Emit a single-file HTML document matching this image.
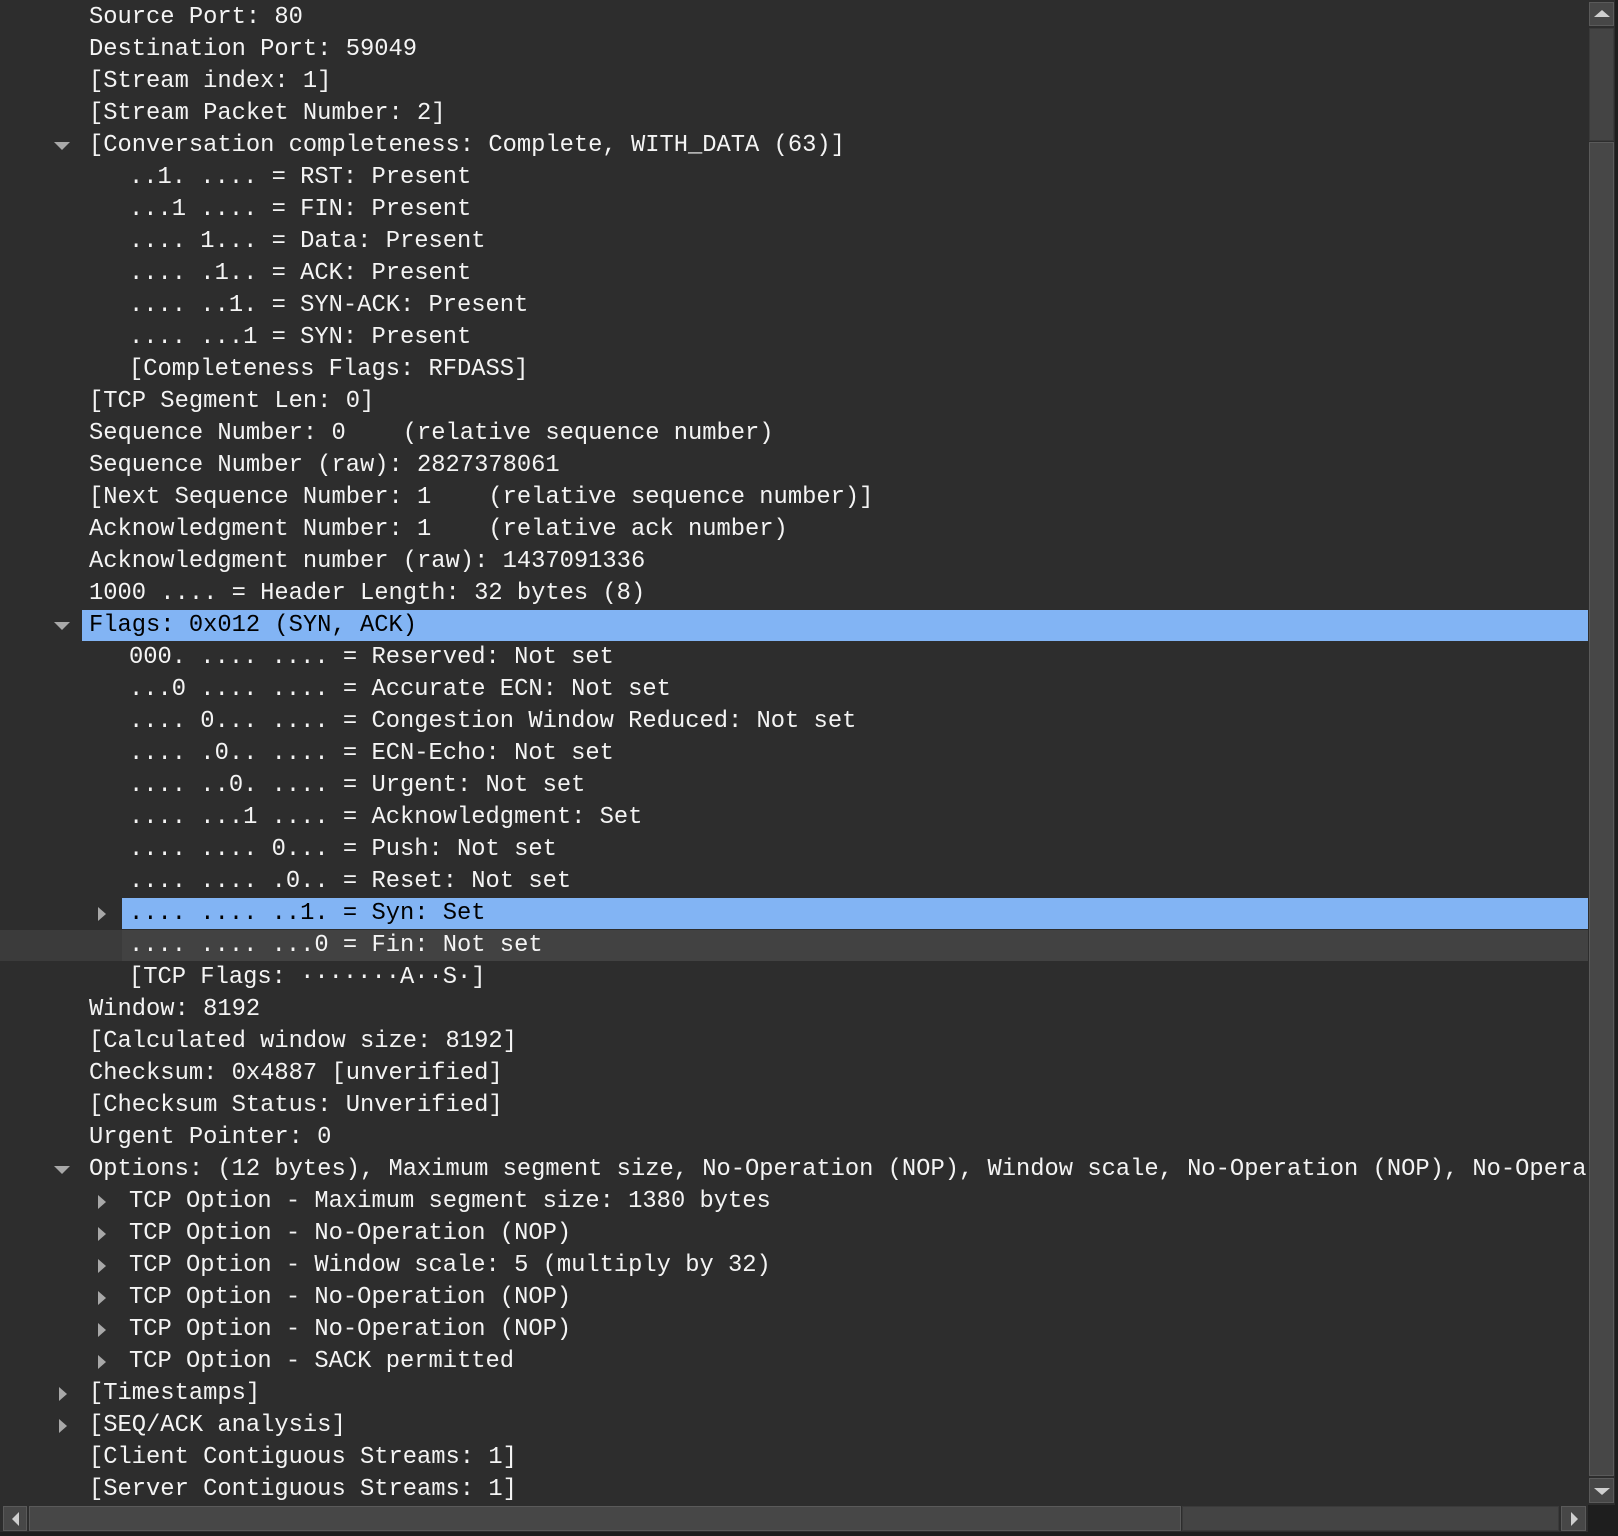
<!DOCTYPE html>
<html><head><meta charset="utf-8"><style>
html,body{margin:0;padding:0;background:#1e1e1e;}
#w{position:relative;width:1618px;height:1536px;overflow:hidden;background:#1e1e1e;}
#p{position:absolute;left:0;top:0;width:1588px;height:1505px;background:#2d2d2d;overflow:hidden;}
.r{position:absolute;left:0;width:1588px;height:32px;font-family:"Liberation Mono",monospace;font-size:23.78px;line-height:32px;color:#f4f4f4;white-space:pre;}
.r span.t{position:absolute;top:0;}
.hl{position:absolute;top:0;right:0;height:31px;background:#82b4f4;}
.hv{position:absolute;top:0;left:0;right:0;height:31px;background:#3b3b3b;}
.hv2{position:absolute;top:0;right:0;height:31px;background:#424242;}
.d{position:absolute;width:0;height:0;border-left:8px solid transparent;border-right:8px solid transparent;border-top:8px solid #a8a8a8;top:12px;}
.a{position:absolute;width:0;height:0;border-top:7px solid transparent;border-bottom:7px solid transparent;border-left:8px solid #a8a8a8;top:9px;}
.sb{position:absolute;background:#474747;border:1px solid #5a5a5a;box-sizing:border-box;}
</style></head><body><div id="w"><div id="p">
<div class="r" style="top:2px"><span class="t" style="left:89px">Source Port: 80</span></div>
<div class="r" style="top:34px"><span class="t" style="left:89px">Destination Port: 59049</span></div>
<div class="r" style="top:66px"><span class="t" style="left:89px">[Stream index: 1]</span></div>
<div class="r" style="top:98px"><span class="t" style="left:89px">[Stream Packet Number: 2]</span></div>
<div class="r" style="top:130px"><i class="d" style="left:54px"></i><span class="t" style="left:89px">[Conversation completeness: Complete, WITH_DATA (63)]</span></div>
<div class="r" style="top:162px"><span class="t" style="left:129px">..1. .... = RST: Present</span></div>
<div class="r" style="top:194px"><span class="t" style="left:129px">...1 .... = FIN: Present</span></div>
<div class="r" style="top:226px"><span class="t" style="left:129px">.... 1... = Data: Present</span></div>
<div class="r" style="top:258px"><span class="t" style="left:129px">.... .1.. = ACK: Present</span></div>
<div class="r" style="top:290px"><span class="t" style="left:129px">.... ..1. = SYN-ACK: Present</span></div>
<div class="r" style="top:322px"><span class="t" style="left:129px">.... ...1 = SYN: Present</span></div>
<div class="r" style="top:354px"><span class="t" style="left:129px">[Completeness Flags: RFDASS]</span></div>
<div class="r" style="top:386px"><span class="t" style="left:89px">[TCP Segment Len: 0]</span></div>
<div class="r" style="top:418px"><span class="t" style="left:89px">Sequence Number: 0    (relative sequence number)</span></div>
<div class="r" style="top:450px"><span class="t" style="left:89px">Sequence Number (raw): 2827378061</span></div>
<div class="r" style="top:482px"><span class="t" style="left:89px">[Next Sequence Number: 1    (relative sequence number)]</span></div>
<div class="r" style="top:514px"><span class="t" style="left:89px">Acknowledgment Number: 1    (relative ack number)</span></div>
<div class="r" style="top:546px"><span class="t" style="left:89px">Acknowledgment number (raw): 1437091336</span></div>
<div class="r" style="top:578px"><span class="t" style="left:89px">1000 .... = Header Length: 32 bytes (8)</span></div>
<div class="r" style="top:610px"><i class="hl" style="left:82px"></i><i class="d" style="left:54px"></i><span class="t" style="left:89px;color:#000">Flags: 0x012 (SYN, ACK)</span></div>
<div class="r" style="top:642px"><span class="t" style="left:129px">000. .... .... = Reserved: Not set</span></div>
<div class="r" style="top:674px"><span class="t" style="left:129px">...0 .... .... = Accurate ECN: Not set</span></div>
<div class="r" style="top:706px"><span class="t" style="left:129px">.... 0... .... = Congestion Window Reduced: Not set</span></div>
<div class="r" style="top:738px"><span class="t" style="left:129px">.... .0.. .... = ECN-Echo: Not set</span></div>
<div class="r" style="top:770px"><span class="t" style="left:129px">.... ..0. .... = Urgent: Not set</span></div>
<div class="r" style="top:802px"><span class="t" style="left:129px">.... ...1 .... = Acknowledgment: Set</span></div>
<div class="r" style="top:834px"><span class="t" style="left:129px">.... .... 0... = Push: Not set</span></div>
<div class="r" style="top:866px"><span class="t" style="left:129px">.... .... .0.. = Reset: Not set</span></div>
<div class="r" style="top:898px"><i class="hl" style="left:122px"></i><i class="a" style="left:98px"></i><span class="t" style="left:129px;color:#000">.... .... ..1. = Syn: Set</span></div>
<div class="r" style="top:930px"><i class="hv"></i><i class="hv2" style="left:122px"></i><span class="t" style="left:129px">.... .... ...0 = Fin: Not set</span></div>
<div class="r" style="top:962px"><span class="t" style="left:129px">[TCP Flags: ·······A··S·]</span></div>
<div class="r" style="top:994px"><span class="t" style="left:89px">Window: 8192</span></div>
<div class="r" style="top:1026px"><span class="t" style="left:89px">[Calculated window size: 8192]</span></div>
<div class="r" style="top:1058px"><span class="t" style="left:89px">Checksum: 0x4887 [unverified]</span></div>
<div class="r" style="top:1090px"><span class="t" style="left:89px">[Checksum Status: Unverified]</span></div>
<div class="r" style="top:1122px"><span class="t" style="left:89px">Urgent Pointer: 0</span></div>
<div class="r" style="top:1154px"><i class="d" style="left:54px"></i><span class="t" style="left:89px">Options: (12 bytes), Maximum segment size, No-Operation (NOP), Window scale, No-Operation (NOP), No-Operation (NOP), SACK permitted</span></div>
<div class="r" style="top:1186px"><i class="a" style="left:98px"></i><span class="t" style="left:129px">TCP Option - Maximum segment size: 1380 bytes</span></div>
<div class="r" style="top:1218px"><i class="a" style="left:98px"></i><span class="t" style="left:129px">TCP Option - No-Operation (NOP)</span></div>
<div class="r" style="top:1250px"><i class="a" style="left:98px"></i><span class="t" style="left:129px">TCP Option - Window scale: 5 (multiply by 32)</span></div>
<div class="r" style="top:1282px"><i class="a" style="left:98px"></i><span class="t" style="left:129px">TCP Option - No-Operation (NOP)</span></div>
<div class="r" style="top:1314px"><i class="a" style="left:98px"></i><span class="t" style="left:129px">TCP Option - No-Operation (NOP)</span></div>
<div class="r" style="top:1346px"><i class="a" style="left:98px"></i><span class="t" style="left:129px">TCP Option - SACK permitted</span></div>
<div class="r" style="top:1378px"><i class="a" style="left:59px"></i><span class="t" style="left:89px">[Timestamps]</span></div>
<div class="r" style="top:1410px"><i class="a" style="left:59px"></i><span class="t" style="left:89px">[SEQ/ACK analysis]</span></div>
<div class="r" style="top:1442px"><span class="t" style="left:89px">[Client Contiguous Streams: 1]</span></div>
<div class="r" style="top:1474px"><span class="t" style="left:89px">[Server Contiguous Streams: 1]</span></div>
</div>
<!-- vertical scrollbar -->
<div style="position:absolute;left:1588px;top:0;width:27px;height:1505px;background:#2d2d2d;"></div>
<div class="sb" style="left:1589px;top:2px;width:25px;height:24px;"><i style="position:absolute;left:4px;top:7px;border-left:8px solid transparent;border-right:8px solid transparent;border-bottom:7px solid #cfcfcf;"></i></div>
<div class="sb" style="left:1589px;top:28px;width:25px;height:113px;background:#444;border-color:#3a3a3a;"></div>
<div class="sb" style="left:1589px;top:142px;width:25px;height:1334px;background:#474747;"></div>
<div class="sb" style="left:1589px;top:1478px;width:25px;height:25px;"><i style="position:absolute;left:4px;top:9px;border-left:8px solid transparent;border-right:8px solid transparent;border-top:7px solid #cfcfcf;"></i></div>
<!-- horizontal scrollbar -->
<div style="position:absolute;left:0;top:1505px;width:1588px;height:27px;background:#2d2d2d;"></div>
<div class="sb" style="left:3px;top:1506px;width:24px;height:25px;"><i style="position:absolute;left:8px;top:5px;border-top:7px solid transparent;border-bottom:7px solid transparent;border-right:7px solid #cfcfcf;"></i></div>
<div class="sb" style="left:29px;top:1506px;width:1152px;height:25px;background:#474747;"></div>
<div class="sb" style="left:1182px;top:1506px;width:377px;height:25px;background:#444;border-color:#3a3a3a;"></div>
<div class="sb" style="left:1561px;top:1506px;width:25px;height:25px;"><i style="position:absolute;left:9px;top:5px;border-top:7px solid transparent;border-bottom:7px solid transparent;border-left:7px solid #cfcfcf;"></i></div>
</div></body></html>
